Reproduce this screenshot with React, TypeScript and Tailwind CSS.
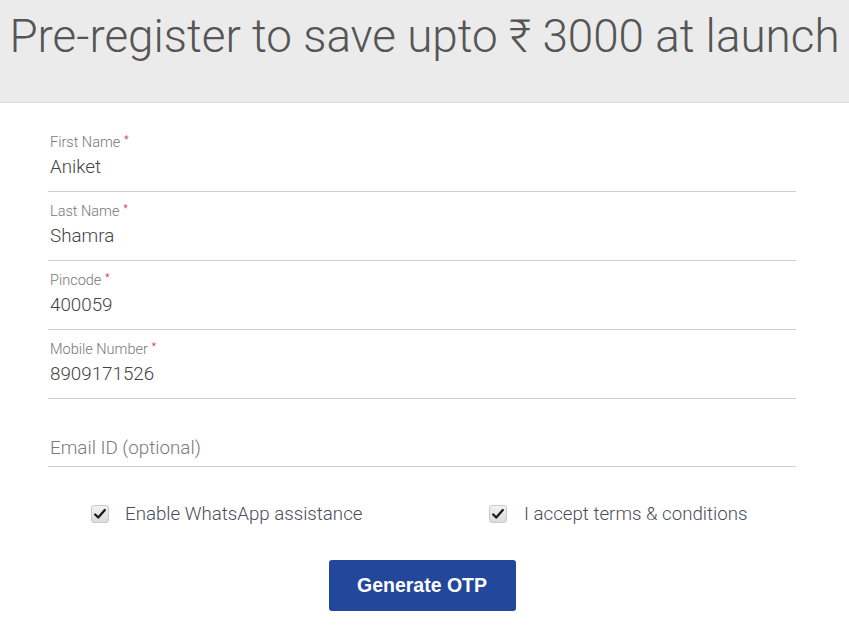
const fields = [
  { label: "First Name", value: "Aniket" },
  { label: "Last Name", value: "Shamra" },
  { label: "Pincode", value: "400059" },
  { label: "Mobile Number", value: "8909171526" },
]

const Tick = () => (
  <span className="flex h-[18px] w-[18px] items-center justify-center rounded-[3px] border border-[#c9c9c9] bg-gradient-to-b from-[#f2f2f2] to-[#dcdcdc]">
    <svg viewBox="0 0 16 16" className="h-[14px] w-[14px]">
      <path d="M2.5 8.5 L6 12 L13.5 3.5" fill="none" stroke="#1a1a1a" strokeWidth="2.6" strokeLinecap="round" strokeLinejoin="round" />
    </svg>
  </span>
)

export default function App() {
  return (
    <div className="min-h-screen bg-white font-['Roboto',sans-serif] font-light">
      <header className="flex h-[103px] items-start justify-center border-b border-[#dcdcdc] bg-[#ebebeb] pt-[11px]">
        <h1 className="text-[45.8px] leading-[52px] font-light whitespace-nowrap text-[#555]">
          Pre-register to save upto ₹ 3000 at launch
        </h1>
      </header>

      <form className="mx-[48px] mt-[20px] w-[748px]">
        {fields.map(f => (
          <div key={f.label} className="border-b border-[#cfcfcf] pt-[12px] pb-[12px] pl-[2px]">
            <label className="flex h-[16px] items-center text-[14.5px] leading-[16px] text-[#777]">
              {f.label}
              <span className="relative -top-[3px] ml-[4px] text-[10px] leading-none text-[#d0021b]">*</span>
            </label>
            <div className="mt-[4px] text-[18.8px] leading-[24px] text-[#444]">{f.value}</div>
          </div>
        ))}
        <div className="border-b border-[#cfcfcf] pt-[37px] pb-[6px] pl-[2px]">
          <input
            className="block w-full text-[18.8px] leading-[24px] font-light text-[#444] outline-none placeholder:text-[#7a7a7a]"
            placeholder="Email ID (optional)"
          />
        </div>

        <div className="mt-[36px] grid grid-cols-2">
          <label className="flex items-center gap-[16px] pl-[43px] text-[18.7px] leading-[22px] text-[#4a4d5c]">
            <Tick />
            Enable WhatsApp assistance
          </label>
          <label className="flex items-center gap-[17px] pl-[67px] text-[18.7px] leading-[22px] text-[#4a4d5c]">
            <Tick />
            I accept terms &amp; conditions
          </label>
        </div>

        <div className="mt-[35px] flex justify-center">
          <button
            type="button"
            className="h-[51px] w-[187px] rounded-[3px] bg-[#22479b] font-['Liberation_Sans',Arial,sans-serif] text-[19.5px] font-bold text-white"
          >
            Generate OTP
          </button>
        </div>
      </form>
    </div>
  )
}
